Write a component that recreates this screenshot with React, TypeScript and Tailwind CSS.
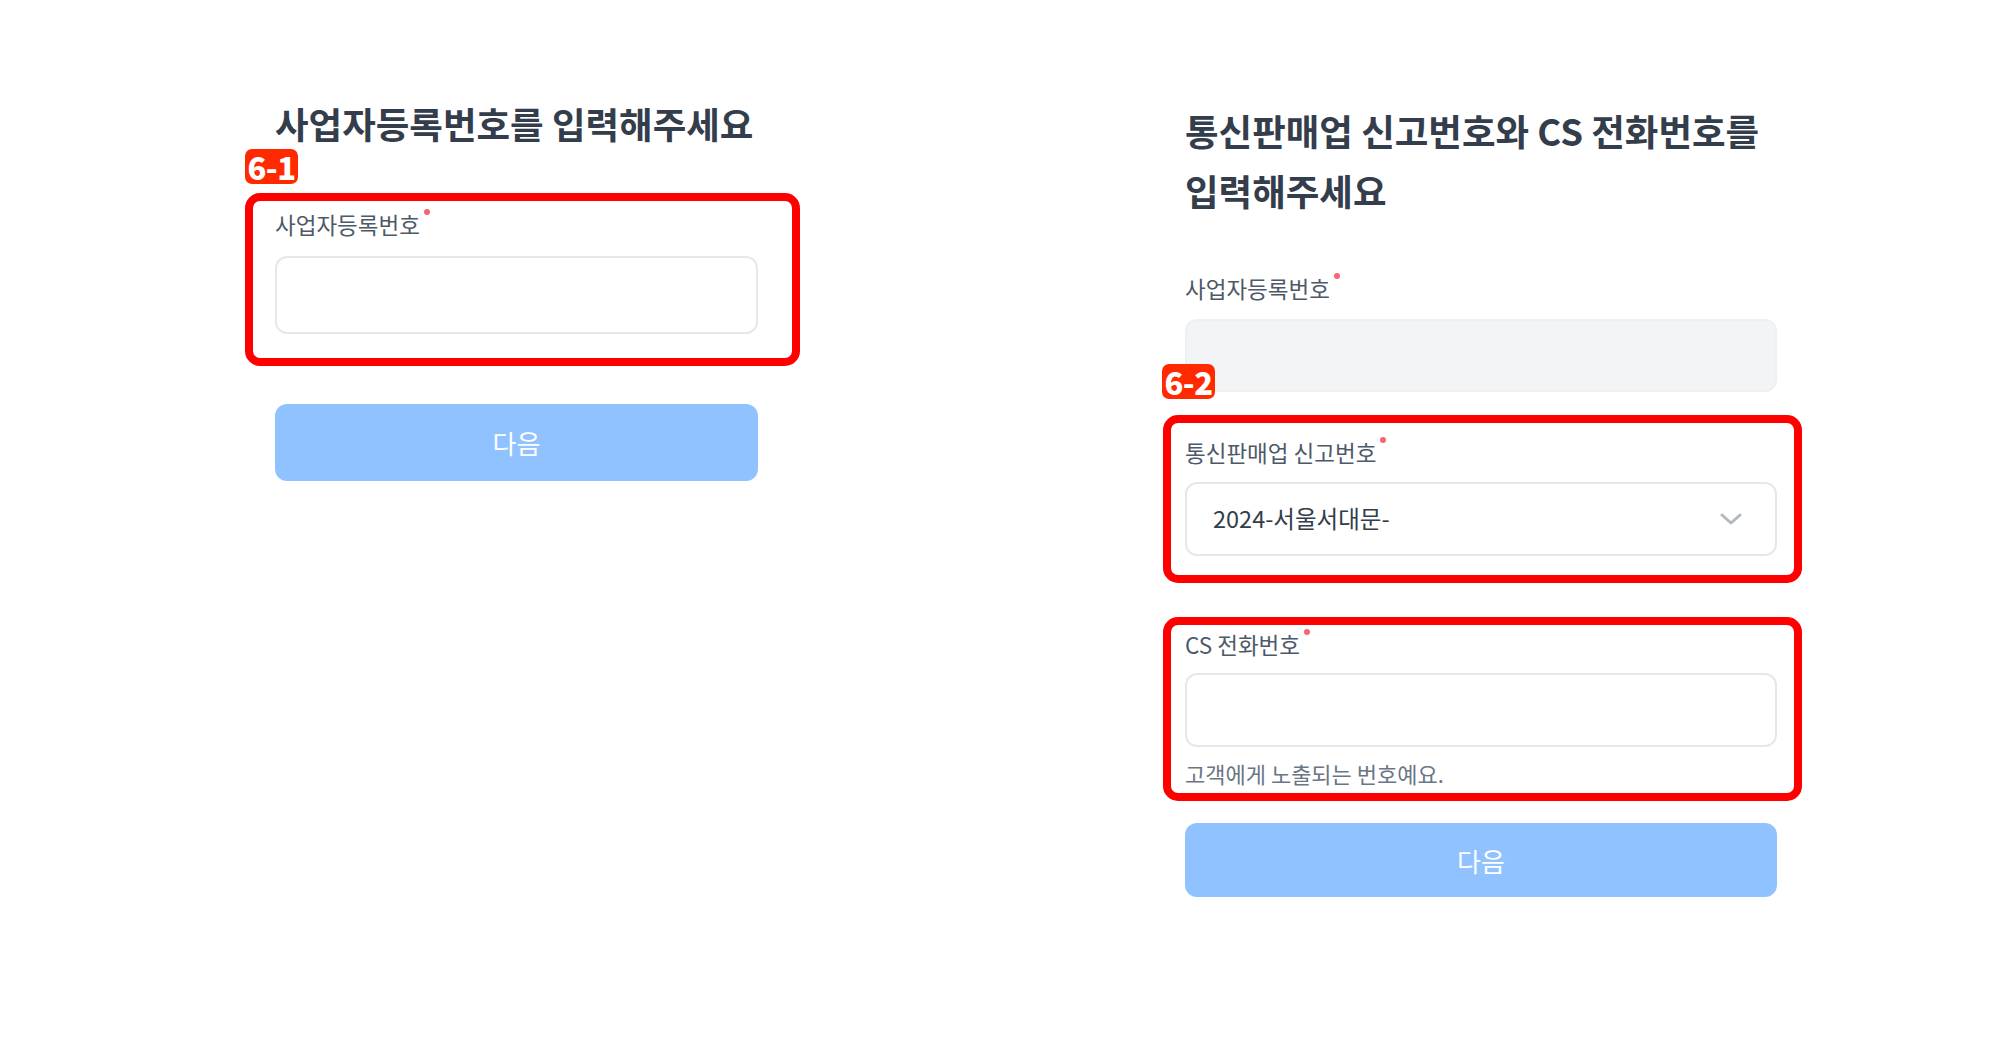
import React from "react";

const font = { fontFamily: '"Noto Sans CJK KR", "Noto Sans", sans-serif' };

function Label({ text }: { text: string }) {
  return (
    <div className="relative inline-block h-[30px] text-[22.5px] leading-[30px] text-[#4e5968]">
      {text}
      <span className="absolute -right-[10px] top-[0px] h-[6px] w-[6px] rounded-full bg-[#f66570]" />
    </div>
  );
}

function Badge({ text, className }: { text: string; className: string }) {
  return (
    <div
      className={
        "absolute flex h-[35px] w-[53px] items-center justify-center rounded-[7px] bg-[#ff2a00] text-[31px] font-black leading-none tracking-[-0.5px] text-white " +
        className
      }
    >
      {text}
    </div>
  );
}

function NextButton({ className }: { className: string }) {
  return (
    <button
      className={
        "flex w-full items-center justify-center rounded-[12px] bg-[#90c2ff] text-[26px] text-white " + className
      }
    >
      다음
    </button>
  );
}

export default function App() {
  return (
    <div className="h-[1037px] w-[2000px] overflow-hidden bg-white" style={font}>
      <div className="flex items-start gap-[427px] pl-[275px]">
        {/* Left column */}
        <div className="flex w-[483px] flex-col pt-[94px]">
          <h1 className="h-[60px] text-[36.5px] font-bold leading-[60px] text-[#333d4b]">
            사업자등록번호를 입력해주세요
          </h1>
          <div className="relative mt-[55px] flex flex-col items-start gap-[17px]">
            <Badge text="6-1" className="-left-[30px] -top-[60px]" />
            <div className="pointer-events-none absolute -bottom-[32px] -left-[30px] -right-[42px] -top-[16px] rounded-[15px] border-[8px] border-[#ff0000]" />
            <Label text="사업자등록번호" />
            <div className="h-[78px] w-full rounded-[12px] border-2 border-[#e5e8eb] bg-white" />
          </div>
          <NextButton className="mt-[70px] h-[77px]" />
        </div>

        {/* Right column */}
        <div className="flex w-[592px] flex-col pt-[101px]">
          <h1 className="text-[36.5px] font-bold leading-[60px] text-[#333d4b]">
            통신판매업 신고번호와 CS 전화번호를 입력해주세요
          </h1>
          <div className="mt-[52px] flex flex-col items-start gap-[16px]">
            <Label text="사업자등록번호" />
            <div className="h-[73px] w-full rounded-[12px] border-2 border-[#eef0f3] bg-[#f2f4f6]" />
          </div>

          <div className="relative mt-[45px] flex flex-col items-start gap-[15px]">
            <Badge text="6-2" className="-left-[23px] -top-[73px]" />
            <div className="pointer-events-none absolute -bottom-[27px] -left-[22px] -right-[25px] -top-[22px] rounded-[15px] border-[8px] border-[#ff0000]" />
            <Label text="통신판매업 신고번호" />
            <div className="flex h-[74px] w-full items-center justify-between rounded-[12px] border-2 border-[#e5e8eb] bg-white pl-[26px] pr-[33px]">
              <span className="text-[23.5px] text-[#333d4b]">2024-서울서대문-</span>
              <svg width="22" height="12" viewBox="0 0 22 12" fill="none">
                <path d="M2 2l9 8 9-8" stroke="#b0b8c1" strokeWidth="3" strokeLinecap="round" strokeLinejoin="round" />
              </svg>
            </div>
          </div>

          <div className="relative mt-[73px] flex flex-col items-start">
            <div className="pointer-events-none absolute -bottom-[13px] -left-[22px] -right-[25px] -top-[12px] rounded-[15px] border-[8px] border-[#ff0000]" />
            <Label text="CS 전화번호" />
            <div className="mt-[14px] h-[74px] w-full rounded-[12px] border-2 border-[#e5e8eb] bg-white" />
            <div className="mt-[11px] h-[30px] text-[22px] leading-[30px] text-[#6b7684]">
              고객에게 노출되는 번호예요.
            </div>
          </div>

          <NextButton className="mt-[35px] h-[74px]" />
        </div>
      </div>
    </div>
  );
}
